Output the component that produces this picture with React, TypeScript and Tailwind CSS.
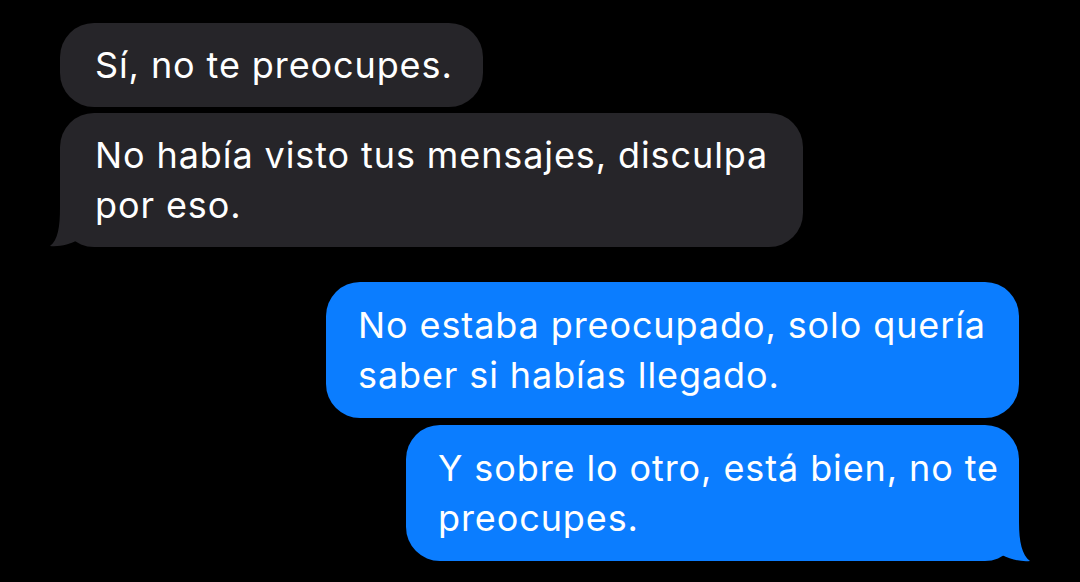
import React from 'react';

type Side = 'in' | 'out';

const Tail = ({ side }: { side: Side }) =>
  side === 'in' ? (
    <svg className="absolute left-[-12px] bottom-0 h-[40px] w-[32px]" viewBox="0 0 32 40">
      <path d="M12 0 C12 20 10 33 2 39 C12 40 22 37 30 33 L30 0 Z" fill="#262529" />
    </svg>
  ) : (
    <svg className="absolute right-[-13px] bottom-[-1px] h-[40px] w-[33px]" viewBox="0 0 33 40">
      <path d="M20 0 C20 20 23 33 31 39 C21 40 11 37 3 33 L3 0 Z" fill="#0b7dff" />
    </svg>
  );

const Bubble = ({ side, text, width, tail }: { side: Side; text: string; width: string; tail?: boolean }) => (
  <div
    className={`relative rounded-[34px] text-[36px] leading-[50px] tracking-[0.9px] text-white ${width} ${
      side === 'in' ? 'bg-[#262529] py-[17px] pl-[35px] pr-[20px]' : 'bg-[#0b7dff] py-[18px] pl-[32px] pr-[4px]'
    }`}
  >
    {tail && <Tail side={side} />}
    <span className="relative">{text}</span>
  </div>
);

export default function App() {
  return (
    <div
      className="flex h-[582px] w-[1080px] flex-col overflow-hidden bg-black pt-[23px]"
      style={{ fontFamily: 'Inter, "Noto Sans", sans-serif' }}
    >
      <div className="flex flex-col items-start gap-[6px] pl-[60px]">
        <Bubble side="in" width="w-[423px]" text="Sí, no te preocupes." />
        <Bubble side="in" width="w-[743px]" text="No había visto tus mensajes, disculpa por eso." tail />
      </div>
      <div className="mt-[35px] flex flex-col items-end gap-[7px] pr-[61px]">
        <Bubble side="out" width="w-[693px]" text="No estaba preocupado, solo quería saber si habías llegado." />
        <Bubble side="out" width="w-[613px]" text="Y sobre lo otro, está bien, no te preocupes." tail />
      </div>
    </div>
  );
}
